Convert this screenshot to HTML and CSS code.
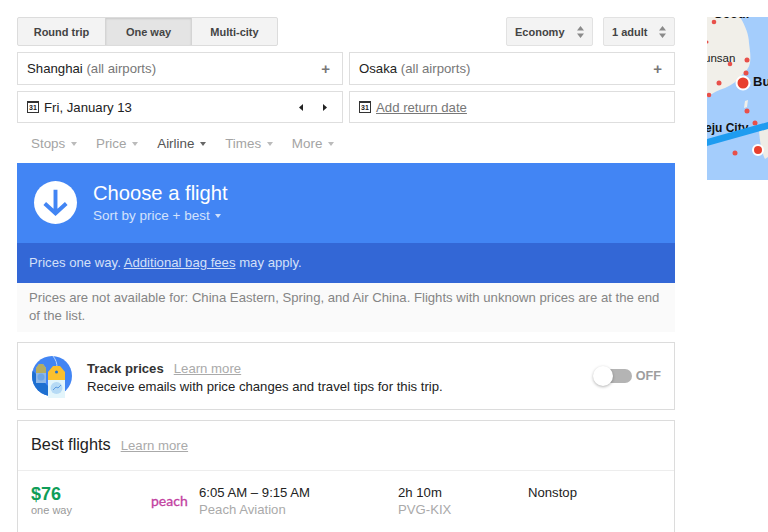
FILE: index.html
```html
<!DOCTYPE html>
<html lang="en">
<head>
  <meta charset="UTF-8" />
  <title>Choose a flight</title>
  <link rel="stylesheet" href="styles.css">
</head>
<body>
  <div class="page">
    <div class="main">
      <div class="top-row">
        <div class="trip-tabs">
          <div class="tab tab-round">Round trip</div>
          <div class="tab tab-one active">One way</div>
          <div class="tab tab-multi">Multi-city</div>
        </div>
        <div class="selects">
          <div class="select select-class">Economy
            <svg class="updown" width="7" height="12" viewBox="0 0 7 12"><path d="M3.500 0L7 4.500H0zM3.500 12L0 7.500h7z"/></svg>
          </div>
          <div class="select select-adults">1 adult
            <svg class="updown" width="7" height="12" viewBox="0 0 7 12"><path d="M3.500 0L7 4.500H0zM3.500 12L0 7.500h7z"/></svg>
          </div>
        </div>
      </div>

      <div class="field-row">
        <div class="field">
          <span>Shanghai <span class="muted">(all airports)</span></span>
          <span class="plus">+</span>
        </div>
        <div class="field">
          <span>Osaka <span class="muted">(all airports)</span></span>
          <span class="plus">+</span>
        </div>
      </div>

      <div class="field-row date-row">
        <div class="field">
          <span class="date-label">
            <span class="cal">31</span>
            Fri, January 13
          </span>
          <span class="date-arrows">
            <svg width="4" height="7" viewBox="0 0 4 7"><path d="M4 0v7L0 3.500z"/></svg>
            <svg width="4" height="7" viewBox="0 0 4 7"><path d="M0 0v7l4-3.500z"/></svg>
          </span>
        </div>
        <div class="field">
          <span class="date-label">
            <span class="cal">31</span>
            <a class="return-link">Add return date</a>
          </span>
        </div>
      </div>

      <div class="filters">
        <span class="filter">Stops <i class="caret"></i></span>
        <span class="filter">Price <i class="caret"></i></span>
        <span class="filter on">Airline <i class="caret"></i></span>
        <span class="filter">Times <i class="caret"></i></span>
        <span class="filter">More <i class="caret"></i></span>
      </div>

      <div class="banner">
        <div class="arrow-disc">
          <svg width="43" height="43" viewBox="0 0 44 44"><path d="M22 9v24M11 23l11 10 11-10" fill="none" stroke="#4285f4" stroke-width="4"/></svg>
        </div>
        <div>
          <div class="banner-title">Choose a flight</div>
          <div class="banner-sort">Sort by price + best <i class="caret caret-light"></i></div>
        </div>
      </div>
      <div class="bag-note">Prices one way. <a>Additional bag fees</a> may apply.</div>
      <div class="price-note">Prices are not available for: China Eastern, Spring, and Air China. Flights with unknown prices are at the end of the list.</div>

      <div class="card track">
        <svg class="track-icon" width="42" height="44" viewBox="0 0 42 44">
          <defs><clipPath id="disc"><circle cx="21" cy="21" r="20"/></clipPath></defs>
          <circle cx="21" cy="21" r="20" fill="#4285f4"/>
          <path d="M0 14L30 44H0z" fill="#1e6fd0" clip-path="url(#disc)"/>
          <path d="M8 9h4l3 4v15H5V13z" fill="#8fb8e8"/>
          <path d="M8 9h4l3 4v5H5v-5z" fill="#b5ad62"/>
          <circle cx="10" cy="22" r="3.500" fill="#6ea6e6"/>
          <path d="M22 1c3 4 4 7 4 12" fill="none" stroke="#bcd6f7" stroke-width="1"/>
          <path d="M22 11h7l5 6v8H17v-8z" fill="#fbc02d"/>
          <circle cx="25.500" cy="17" r="1.500" fill="#1e6fd0"/>
          <rect x="17" y="25" width="17" height="18" fill="#e3f5fb"/>
          <circle cx="25.500" cy="33" r="6" fill="#b6daf5"/>
          <path d="M22 35l3-3 2 1 3-3" fill="none" stroke="#5c9ae0" stroke-width="1"/>
        </svg>
        <div class="track-text">
          <div><b>Track prices</b><a class="learn">Learn more</a></div>
          <div>Receive emails with price changes and travel tips for this trip.</div>
        </div>
        <div class="toggle">
          <div class="toggle-track"><div class="toggle-knob"></div></div>
          <span class="toggle-label">OFF</span>
        </div>
      </div>

      <div class="card best">
        <div class="best-head">
          <span class="best-title">Best flights</span><a class="learn">Learn more</a>
        </div>
        <div class="flight">
          <div class="col-price">
            <div class="price">$76</div>
            <div class="price-sub">one way</div>
          </div>
          <div class="col-logo">peach</div>
          <div class="col-times">
            <div>6:05 AM – 9:15 AM</div>
            <div class="sub">Peach Aviation</div>
          </div>
          <div class="col-duration">
            <div>2h 10m</div>
            <div class="sub">PVG-KIX</div>
          </div>
          <div>Nonstop</div>
        </div>
      </div>
    </div>

    <svg class="map" width="61" height="163" viewBox="0 0 61 163">
      <rect width="61" height="163" fill="#a4cdfc"/>
      <path d="M0 0h33c5 8 9 18 9 26 1 8 2 14 1 20-1 5-4 8-8 12-5 6-10 10-17 13-7 2-12 5-18 9z" fill="#f1efe9"/>
      <path d="M52 114l9-4v30l-3 2c-3-6-5-16-6-28z" fill="#eeece6"/>
      <path d="M38 84l3-1-1 7-3 1z" fill="#f1efe9"/>
      <text class="map-city" x="7" y="1">Seoul</text>
      <g fill="#e8504a">
        <circle cx="7" cy="5" r="2.300"/>
        <circle cx="40" cy="43" r="2.500"/>
        <circle cx="23" cy="47" r="2.300"/>
        <circle cx="39" cy="56" r="2.500"/>
        <circle cx="12" cy="66" r="2.500"/>
        <circle cx="2" cy="78" r="2.300"/>
        <circle cx="40" cy="94" r="2.500"/>
        <circle cx="48" cy="106" r="2.500"/>
        <circle cx="28" cy="136" r="2.500"/>
        <circle cx="0" cy="25" r="1.500"/>
      </g>
      <circle cx="36" cy="66" r="6.500" fill="#e8402f" stroke="#fff" stroke-width="2"/>
      <circle cx="51" cy="133" r="5" fill="#e8402f" stroke="#fff" stroke-width="2"/>
      <text class="map-city" x="46" y="69">Bu</text>
      <text class="map-town" x="-3" y="45">unsan</text>
      <text class="map-city map-small" x="-2" y="115">eju City</text>
      <path d="M0 122L61 105v7L0 129z" fill="#1e9cf0"/>
    </svg>
  </div>
</body>
</html>
```

FILE: styles.css
```css
html, body {
  margin: 0;
  height: 532px;
  overflow: hidden;
  background-color: #fff;
}
body {
  font-family: "Liberation Sans", Arial, sans-serif;
  font-size: 13.15px;
  color: #222;
}
a {
  text-decoration: underline;
}
.page {
  display: flex;
  align-items: flex-start;
  gap: 32px;
  padding: 17px 0 0 17px;
}
.main {
  width: 658px;
  flex: none;
}
.map {
  flex: none;
  overflow: hidden;
}
.map-city {
  font-size: 13px;
  font-weight: bold;
  fill: #111;
}
.map-small {
  font-size: 12px;
}
.map-town {
  font-size: 11.5px;
  fill: #222;
}

/* top row */
.top-row {
  display: flex;
  justify-content: space-between;
  height: 29px;
}
.trip-tabs {
  display: flex;
  border: 1px solid #dcdcdc;
  border-radius: 2px;
  background-color: #f3f3f3;
}
.tab {
  display: flex;
  align-items: center;
  justify-content: center;
  box-sizing: border-box;
  font-size: 11px;
  font-weight: bold;
  color: #444;
}
.tab-round { width: 87px; }
.tab-one { width: 87px; }
.tab-multi { width: 85px; }
.tab.active {
  background-color: #e4e4e4;
  box-shadow: inset 0 1px 2px rgba(0, 0, 0, 0.12);
  border-left: 1px solid #d4d4d4;
  border-right: 1px solid #d4d4d4;
}
.selects {
  display: flex;
  gap: 10px;
}
.select {
  display: flex;
  align-items: center;
  justify-content: space-between;
  box-sizing: border-box;
  padding: 0 8px 0 8px;
  border: 1px solid #e2e2e2;
  border-radius: 2px;
  background-color: #f3f3f3;
  font-size: 11px;
  font-weight: bold;
  color: #444;
}
.select-class { width: 87px; }
.select-adults { width: 72px; }
.updown {
  fill: #8a8a8a;
}

/* search fields */
.field-row {
  display: flex;
  gap: 6px;
  margin-top: 6px;
}
.date-row .field {
  height: 32px;
}
.field {
  flex: 1;
  display: flex;
  align-items: center;
  justify-content: space-between;
  box-sizing: border-box;
  height: 33px;
  padding: 0 12px 0 9px;
  border: 1px solid #dedede;
  font-size: 13.2px;
}
.muted {
  color: #777;
}
.plus {
  font-size: 15px;
  font-weight: bold;
  color: #777;
}
.date-label {
  display: flex;
  align-items: center;
  gap: 5px;
}
.cal {
  display: block;
  box-sizing: border-box;
  width: 12px;
  height: 12px;
  border: 1px solid #333;
  border-top-width: 2px;
  font-size: 7px;
  line-height: 9px;
  text-align: center;
  font-weight: bold;
}
.date-arrows {
  display: flex;
  gap: 20px;
  padding-right: 3px;
}
.date-arrows svg {
  fill: #222;
}
.return-link {
  color: #777;
}

/* filters */
.filters {
  display: flex;
  gap: 19px;
  height: 40px;
  align-items: center;
  padding-left: 14px;
  color: #a4a4a4;
  font-size: 13.4px;
}
.filter.on {
  color: #555;
}
.caret {
  display: inline-block;
  margin-left: 2px;
  vertical-align: 2px;
  border-top: 4px solid #bbb;
  border-left: 3.500px solid transparent;
  border-right: 3.500px solid transparent;
}
.filter.on .caret {
  border-top-color: #666;
}
.caret-light {
  border-top-color: #cfe0fb;
}

/* blue banner */
.banner {
  display: flex;
  align-items: center;
  gap: 16px;
  height: 80px;
  padding-left: 17px;
  background-color: #4285f4;
  color: #fff;
}
.arrow-disc {
  width: 43px;
  height: 43px;
  margin-top: -2px;
  border-radius: 50%;
  background-color: #fff;
}
.banner-title {
  font-size: 20.2px;
  line-height: 24px;
}
.banner-sort {
  margin-top: 1px;
  font-size: 13.5px;
  line-height: 20px;
  color: #d3e2fc;
}
.bag-note {
  height: 40px;
  line-height: 40px;
  padding-left: 12px;
  background-color: #3367d6;
  color: #d3e0f8;
}
.price-note {
  box-sizing: border-box;
  height: 49px;
  padding: 6px 12px 0;
  line-height: 18px;
  background-color: #fafafa;
  color: #858585;
}

/* cards */
.card {
  box-sizing: border-box;
  border: 1px solid #dcdcdc;
}
.track {
  display: flex;
  align-items: center;
  height: 68px;
  margin-top: 10px;
  padding: 0 13px;
}
.track-icon {
  flex: none;
  margin-top: 2px;
}
.track-text {
  flex: 1;
  margin-left: 14px;
  padding-top: 3px;
  line-height: 18px;
}
.track-text b {
  color: #333;
}
.learn {
  margin-left: 10px;
  font-size: 13.2px;
  color: #aaa;
}
.toggle {
  display: flex;
  align-items: center;
  gap: 4px;
}
.toggle-track {
  position: relative;
  width: 29px;
  height: 14px;
  border-radius: 7px;
  background-color: #b4b4b4;
}
.toggle-knob {
  position: absolute;
  left: -10px;
  top: -3px;
  width: 20px;
  height: 20px;
  border-radius: 50%;
  background-color: #fff;
  box-shadow: 0 1px 3px rgba(0, 0, 0, 0.3);
}
.toggle-label {
  font-size: 12.6px;
  font-weight: bold;
  color: #9e9e9e;
}
.best {
  margin-top: 10px;
  height: 130px;
}
.best-head {
  display: flex;
  align-items: baseline;
  height: 50px;
  box-sizing: border-box;
  padding: 14px 0 0 13px;
  border-bottom: 1px solid #ededed;
}
.best-title {
  font-size: 16.3px;
  color: #222;
}
.flight {
  display: flex;
  padding: 13px 0 0 13px;
  line-height: 17px;
}
.col-price { width: 120px; }
.price {
  font-size: 18px;
  font-weight: bold;
  line-height: 20px;
  color: #0f9d58;
}
.price-sub {
  font-size: 11px;
  line-height: 13px;
  color: #999;
}
.col-logo {
  width: 48px;
  padding-top: 8px;
  font-family: Lato, sans-serif;
  font-size: 14px;
  color: #c2409f;
  -webkit-text-stroke: 0.3px #c2409f;
}
.col-times { width: 199px; }
.col-duration { width: 130px; }
.sub {
  color: #aaa;
}
```
